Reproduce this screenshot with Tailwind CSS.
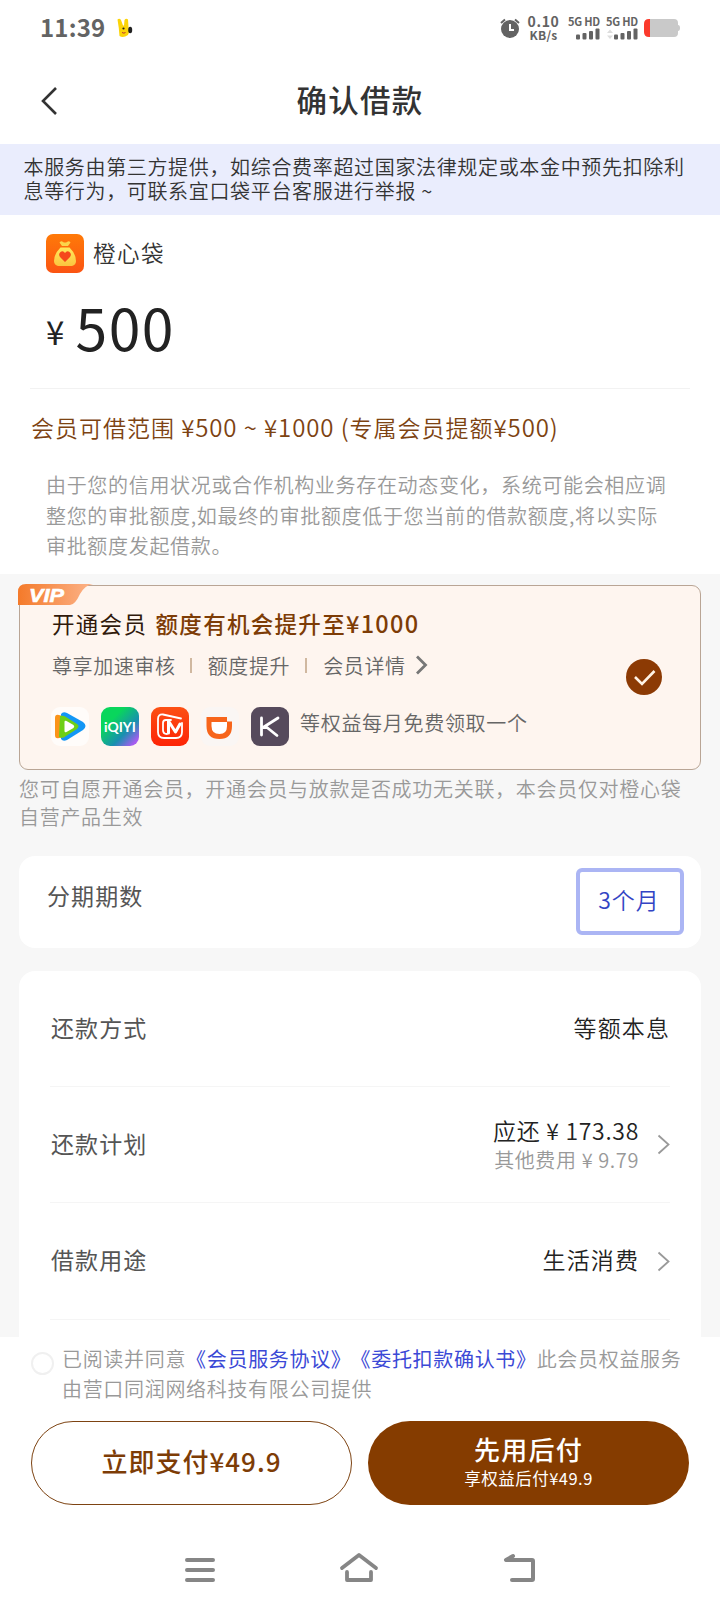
<!DOCTYPE html>
<html lang="zh-CN">
<head>
<meta charset="utf-8">
<title>确认借款</title>
<script src="https://cdn.jsdelivr.net/npm/@tailwindcss/browser@4"></script>
</head>
<body class="w-[720px] h-[1612px] overflow-hidden bg-white font-['Noto_Sans_CJK_SC',sans-serif] text-[#333] whitespace-nowrap">
<div class="flex flex-col h-[1612px]">
  <!-- status bar -->
  <header class="h-[56px] shrink-0 flex items-center pl-[40px] pr-[40px] text-[#636363]">
    <span class="font-bold text-[24px] leading-[54px] tracking-[0.200px] w-[76px] mt-[-2px]">11:39</span>
    <svg class="w-[18px] h-[20px]" viewBox="0 0 18 20"><path d="M1.500 1.500Q3.500 0 5 2L7 7.500h1L8.500 2Q10 0 12 1.500L12.500 9Q14 13 12 17Q7 20.500 3.500 18Q3 10 1.500 1.500z" fill="#fbd408"/><ellipse cx="14.200" cy="12" rx="2" ry="3.200" fill="#222"/><circle cx="7.500" cy="10.500" r="1.100" fill="#222"/><path d="M6 14.500q2 1.300 3.500 0" stroke="#b33" fill="none"/></svg>
    <div class="ml-auto flex items-center">
      <svg class="w-[20px] h-[20px]" viewBox="0 0 20 20"><circle cx="10" cy="11" r="9" fill="#636363"/><path d="M10 6v6h4" stroke="#fff" stroke-width="2" fill="none"/><path d="M1 5L5 1.500M19 5L15 1.500" stroke="#636363" stroke-width="2"/></svg>
      <div class="ml-[7px] w-[33px] flex flex-col items-center font-bold leading-[13px]"><span class="tracking-[0.700px] text-[14px]">0.10</span><span class="text-[12px] tracking-[0.300px]">KB/s</span></div>
      <div class="ml-[7px] w-[33px] flex flex-col items-end font-bold mt-[-1px]"><span class="text-[11px] leading-[12px] tracking-[-0.200px]">5G HD</span>
        <svg class="w-[24px] h-[12px] mt-px" viewBox="0 0 24 12" fill="#636363"><rect x="0" y="6.500" width="4" height="5" rx="1"/><rect x="6.500" y="5" width="4" height="6.500" rx="1"/><rect x="13" y="3" width="4" height="8.500" rx="1"/><rect x="19.500" y="0.500" width="4" height="11" rx="1"/></svg></div>
      <div class="ml-[5px] w-[33px] flex flex-col items-end font-bold mt-[-1px]"><span class="text-[11px] leading-[12px] tracking-[-0.200px]">5G HD</span>
        <svg class="w-[32px] h-[12px] mt-px" viewBox="-8 0 32 12" fill="#636363"><path d="M-7 5l3-3.500 3 3.500zM-7 7.500l3 3.500 3-3.500z" fill="#ddd"/><rect x="0" y="6.500" width="4" height="5" rx="1"/><rect x="6.500" y="5" width="4" height="6.500" rx="1"/><rect x="13" y="3" width="4" height="8.500" rx="1"/><rect x="19.500" y="0.500" width="4" height="11" rx="1"/></svg></div>
      <svg class="ml-[6px] w-[36px] h-[18px]" viewBox="0 0 36 18"><path d="M6 0h24q4 0 4 4v2q2 0 2 3t-2 3v2q0 4-4 4H6z" fill="#c9c9c9"/><path d="M6 0H5Q0 0 0 5v8q0 5 5 5h1z" fill="#fb3a2c"/></svg>
    </div>
  </header>
  <!-- title bar -->
  <div class="h-[88px] shrink-0 grid grid-cols-[100px_1fr_100px] items-center">
    <svg class="ml-[40px] mt-px w-[18px] h-[30px]" viewBox="0 0 18 30"><path d="M16 2L3 15l13 13" fill="none" stroke="#333" stroke-width="2.600"/></svg>
    <h1 class="text-center font-medium text-[30.500px] leading-[40px] tracking-[1.300px] mt-[-3px]">确认借款</h1>
  </div>
  <div class="h-[71px] shrink-0 bg-[#eaedfd] pl-[23.500px] pt-[10.500px] text-[20px] leading-[24.500px] tracking-[0.660px] font-[350]">本服务由第三方提供，如综合费率超过国家法律规定或本金中预先扣除利<br>息等行为，可联系宜口袋平台客服进行举报 ~</div>
  <!-- amount -->
  <section class="h-[174px] shrink-0 mx-[30px] border-b border-[#f2f2f2] pl-[16px] pt-[19px]">
    <div class="flex items-center h-[38px]">
      <svg class="w-[38px] h-[39px]" viewBox="0 0 38 39"><defs><linearGradient id="o" x2="0" y2="1"><stop stop-color="#ff7a08"/><stop offset="1" stop-color="#fb5413"/></linearGradient><linearGradient id="y" x2="0" y2="1"><stop stop-color="#ffe95c"/><stop offset="1" stop-color="#fbc53f"/></linearGradient></defs><rect width="38" height="39" rx="7" fill="url(#o)"/><path d="M13.500 8.500q2-2 3.500-.500 2 1 4 0 2-1.500 3.500.500L22 12h-6z" fill="#fbd54b"/><path d="M14.500 13.500h9Q30 20 30 27q0 4-4 5H12q-4-1-4-5 0-7 6.500-13.500z" fill="url(#y)"/><path d="M19 28l-5-5q-2-3 .500-5t4.500 1q2-3 4.500-1t.500 5z" fill="#f5481b"/></svg>
      <span class="ml-[9px] text-[22.500px] leading-[38px] tracking-[1.500px] mt-[-3px] font-[350]">橙心袋</span>
    </div>
    <div class="flex items-baseline mt-[10px] text-[#222] leading-[88px] h-[88px]"><span class="w-[29.500px] -translate-y-[6px] text-[33px]">¥</span><span class="text-[57px] tracking-[1.500px]">500</span></div>
  </section>
  <p class="shrink-0 h-[80px] pl-[31px] text-[23px] leading-[76px] tracking-[1px] text-[#7d4312] font-[350]">会员可借范围 <span class="text-[24px] tracking-[0.900px]">¥500 ~ ¥1000 (</span>专属会员提额<span class="text-[24px] tracking-[0.900px]">¥500)</span></p>
  <p class="shrink-0 h-[105px] pl-[46px] pt-px text-[20px] leading-[30.500px] tracking-[0.680px] text-[#999] font-[350]">由于您的信用状况或合作机构业务存在动态变化，系统可能会相应调<br>整您的审批额度,如最终的审批额度低于您当前的借款额度,将以实际<br>审批额度发起借款。</p>

  <main class="shrink-0 h-[763px] bg-[#f7f7f7] px-[19px] pt-[11px] overflow-hidden">
    <!-- membership card -->
    <section class="relative h-[185px] rounded-[9px] border border-[#b9a595] bg-[#fef5ef] flex items-center pl-[32px] pr-[38px] justify-between">
      <svg class="absolute left-[-2px] top-[-2px] w-[76px] h-[21px]" viewBox="0 0 76 21"><defs><linearGradient id="v"><stop stop-color="#f47a2a"/><stop offset="1" stop-color="#fcb389"/></linearGradient></defs><path d="M0 21V8Q0 0 8 0H75Q67 1 62 10Q57 21 52 21z" fill="url(#v)"/><text x="11" y="17.500" font-family="Liberation Sans" font-weight="bold" font-style="italic" font-size="19" textLength="35" lengthAdjust="spacingAndGlyphs" fill="#fff" stroke="#fff" stroke-width=".6">VIP</text></svg>
      <div class="h-full pt-[20px]">
        <h2 class="text-[22.500px] leading-[34px] tracking-[1.300px] text-[#30190b]">开通会员 <span class="ml-[2px] font-medium text-[#7d3c06]">额度有机会提升至<span class="text-[23.500px]">¥1000</span></span></h2>
        <div class="flex items-center h-[34px] mt-[8.500px] text-[20px] leading-[34px] tracking-[0.620px] text-[#666] font-[350]">
          <span>尊享加速审核</span><i class="w-[2px] h-[15px] bg-[#d0b8a0] ml-[14px] mr-[16px]"></i><span>额度提升</span><i class="w-[2px] h-[15px] bg-[#d0b8a0] ml-[15px] mr-[16px]"></i><span>会员详情</span>
          <svg class="ml-[9px] w-[13px] h-[20px] mt-[-2px]" viewBox="0 0 13 20"><path d="M2 1.500L10.500 10 2 18.500" fill="none" stroke="#777" stroke-width="2.800"/></svg>
        </div>
        <div class="flex items-center gap-[12px] mt-[24.500px] ml-[-1px] h-[39px]">
          <svg class="w-[38px] h-[39px]" viewBox="0 0 38 39"><rect width="38" height="39" rx="9" fill="#fffcfa"/><path d="M10 7q2-3 6-1l16 9q5 4 0 8l-16 10q-4 2-6-1z" fill="#1296f5"/><path d="M4 11q0-4 4-3l6 2v20l-6 1q-4 1-4-3z" fill="#fb941a"/><path d="M9 9q3-1 6 1l11 7q3 2 0 5l-11 7q-4 3-7 1z" fill="#6dcf16"/><path d="M13.500 15q0-2 2-1l7 4q1.500 1.500 0 3l-7 4q-2 1-2-1z" fill="#fff"/></svg>
          <svg class="w-[38px] h-[39px]" viewBox="0 0 38 39"><defs><linearGradient id="q" x2="1" y2="1"><stop offset=".3" stop-color="#09d65c"/><stop offset=".65" stop-color="#198fb0"/><stop offset=".9" stop-color="#a65cf0"/></linearGradient></defs><rect width="38" height="39" rx="9" fill="url(#q)"/><text x="3" y="24.500" font-family="Lato" font-weight="bold" font-size="14" textLength="32" lengthAdjust="spacingAndGlyphs" fill="#fff">iQIYI</text></svg>
          <svg class="w-[38px] h-[39px]" viewBox="0 0 38 39"><defs><linearGradient id="m" x2="0" y2="1"><stop stop-color="#fc5014"/><stop offset="1" stop-color="#fd2406"/></linearGradient></defs><rect width="38" height="39" rx="9" fill="url(#m)"/><g fill="none" stroke="#fff" stroke-linejoin="round" stroke-linecap="round"><path d="M30 11.500L12 7.500Q7 7 7 12v13q0 6 6 6h12q6 0 6-6v-9" stroke-width="1.800"/><path d="M20 13h-5q-3 0-3 3v7q0 4 4 4" stroke-width="1.800"/><path d="M17.500 26V14l7 11 4.500-8" stroke-width="3"/></g></svg>
          <svg class="w-[38px] h-[39px]" viewBox="0 0 38 39"><rect width="38" height="39" rx="9" fill="#faf6f4"/><path d="M5.500 10H26V14.500H31V19Q31 32 18.500 32Q5.500 32 5.500 19z" fill="#f7651b"/><path d="M10.500 15H26V19q0 8-7.500 8-8 0-8-8z" fill="#fff"/></svg>
          <svg class="w-[38px] h-[39px]" viewBox="0 0 38 39"><rect width="38" height="39" rx="9" fill="#564a5c"/><path d="M10.500 11v17M27 11L12 20.500h4l10 8" fill="none" stroke="#fff" stroke-width="2.800" stroke-linejoin="round" stroke-linecap="round"/></svg>
          <span class="text-[20px] leading-[34px] tracking-[0.700px] text-[#666] mt-[-8px] ml-[-1px] font-[350]">等权益每月免费领取一个</span>
        </div>
      </div>
      <svg class="w-[36px] h-[36px] mt-[-2px]" viewBox="0 0 36 36"><circle cx="18" cy="18" r="18" fill="#8c3a04"/><path d="M9 18l7 7L28.500 12" fill="none" stroke="#fff3e6" stroke-width="2.600"/></svg>
    </section>
    <p class="h-[86px] pt-[5px] text-[20px] leading-[28px] tracking-[0.700px] text-[#999] font-[350]">您可自愿开通会员，开通会员与放款是否成功无关联，本会员仅对橙心袋<br>自营产品生效</p>
    <section class="h-[92px] rounded-[16px] bg-white flex justify-between pl-[28px] pr-[17px] pt-[12px]">
      <span class="text-[23px] leading-[54px] tracking-[1.100px] text-[#555]">分期期数</span>
      <div class="w-[108px] h-[67px] rounded-[6px] border-4 border-[#abb5f4] text-center text-[23px] leading-[54px] tracking-[1px] text-[#3344c4] font-[350] pr-[2px]">3个月</div>
    </section>
    <section class="mt-[23px] h-[380px] rounded-t-[16px] bg-white pl-[31px] pr-[31px] text-[23px] tracking-[1.100px]">
      <div class="h-[116px] flex items-center justify-between border-b border-[#f5f5f5]"><span class="text-[#555] mt-[-2px] ml-px">还款方式</span><span class="mt-[-2px] font-[350] text-[#222]">等额本息</span></div>
      <div class="h-[116px] flex items-center border-b border-[#f5f5f5]"><span class="text-[#555] mt-[-2px] mr-auto ml-px">还款计划</span>
        <div class="text-right mt-[-3px]"><div class="leading-[32px] tracking-[0.700px] font-[350] text-[#222]">应还 ¥ 173.38</div><div class="text-[20px] leading-[27px] tracking-[0.600px] text-[#999] font-[350]">其他费用 ¥ 9.79</div></div>
        <svg class="ml-[18px] w-[13px] h-[21px]" viewBox="0 0 13 21"><path d="M1.500 1.500l10 9-10 9" fill="none" stroke="#999" stroke-width="1.800"/></svg></div>
      <div class="h-[117px] flex items-center border-b border-[#f5f5f5]"><span class="text-[#555] mt-[-3px] mr-auto ml-px">借款用途</span><span class="mt-[-3px] font-[350] text-[#222]">生活消费</span>
        <svg class="ml-[18px] w-[13px] h-[21px]" viewBox="0 0 13 21"><path d="M1.500 1.500l10 9-10 9" fill="none" stroke="#999" stroke-width="1.800"/></svg></div>
    </section>
  </main>
  <!-- agreement and actions -->
  <footer class="flex-1 bg-white">
    <div class="flex h-[84px] pl-[31px] pt-[7px]">
      <i class="w-[23px] h-[23px] rounded-full border-2 border-[#f0f0f0] mt-[8px] shrink-0"></i>
      <p class="ml-[8px] text-[20px] leading-[30px] tracking-[0.680px] text-[#999] font-[350]">已阅读并同意<span class="text-[#3b49d6] font-normal">《会员服务协议》<span class="inline-block ml-[-1px]">《委托扣款确认书》</span></span>此会员权益服务<br>由营口同润网络科技有限公司提供</p>
    </div>
    <div class="flex gap-[16px] px-[31px] h-[84px]">
      <button class="w-[321px] rounded-full border border-[#7d4312] text-[26px] leading-[76px] tracking-[1px] text-[#7d3c06] font-medium pb-[4px]">立即支付¥49.9</button>
      <button class="w-[321px] rounded-full bg-[#853c00] text-white flex flex-col items-center font-medium pt-[10px]"><span class="text-[26px] leading-[36px] tracking-[1.300px]">先用后付</span><span class="text-[16.500px] leading-[22px] tracking-[0.500px] font-normal">享权益后付¥49.9</span></button>
    </div>
    <nav class="flex items-center justify-between pl-[185px] pr-[184px] mt-[47px] h-[34px]">
      <svg class="w-[30px] h-[34px]" viewBox="0 0 30 34"><path d="M2 8h26M2 18h26M2 28h26" stroke="#868686" stroke-width="4" stroke-linecap="round"/></svg>
      <svg class="w-[40px] h-[34px]" viewBox="0 0 40 34" fill="none" stroke="#868686" stroke-width="3.800" stroke-linecap="round" stroke-linejoin="round"><path d="M3 16L20 3l17 13M8 20v8h24v-8"/></svg>
      <svg class="w-[33px] h-[34px]" viewBox="0 0 33 34" fill="none" stroke="#868686" stroke-width="4" stroke-linecap="round" stroke-linejoin="round"><path d="M10 4L3 8h26q1 0 1 1v18q0 1-1 1H9"/></svg>
    </nav>
  </footer>
</div>
</body>
</html>
